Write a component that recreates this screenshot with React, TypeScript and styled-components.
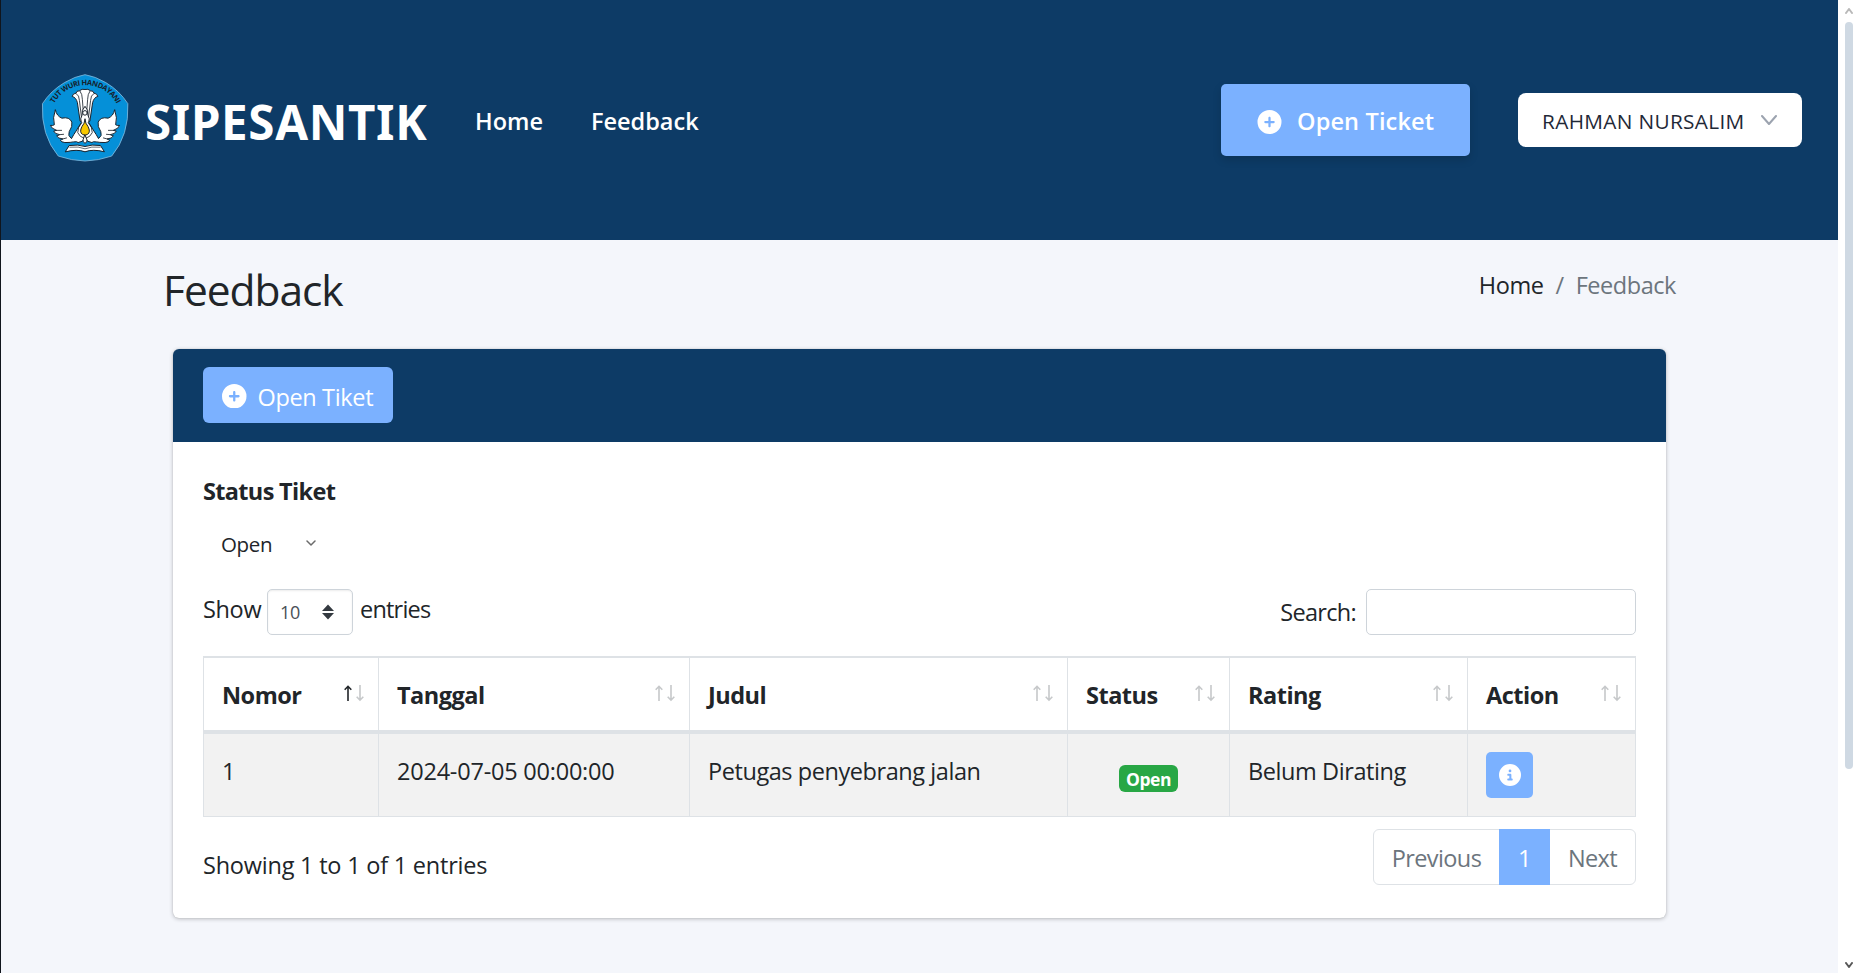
import React from "react";
import styled, { createGlobalStyle } from "styled-components";
import { FaCircleInfo, FaCirclePlus } from "react-icons/fa6";

const navy = "#0d3b66";
const sky = "#7bb1ff";
const line = "#dee2e6";
const ink = "#212529";

const GlobalStyle = createGlobalStyle`
  *, *::before, *::after { box-sizing: border-box; }
  html, body { margin: 0; height: 100%; overflow: hidden; background: #fff; }
  body {
    font: 400 23.5px/36px "Open Sans", "Noto Sans", sans-serif;
    letter-spacing: -0.35px;
    color: ${ink};
  }
  h1, p, label, nav { margin: 0; }
  button, input { font: inherit; letter-spacing: inherit; }
`;

const Window = styled.div`
  display: flex;
  width: 1859px;
  height: 973px;
  border-left: 1px solid #10151c;
`;

const Page = styled.div`
  flex: 1;
  min-width: 0;
  background: #f4f6fb;
`;

const Header = styled.header`
  display: flex;
  align-items: center;
  height: 240px;
  padding: 0 36px 0 40px;
  background: ${navy};
`;

const LogoSvg = styled.svg`
  width: 88px;
  height: 88px;
  margin-bottom: 4px;
`;

const Brand = styled.a`
  width: 297px;
  margin-left: 16px;
  padding-top: 4px;
  color: #fff;
  font: 700 47.5px/64px "Noto Sans", sans-serif;
  letter-spacing: 0.65px;
`;

const Nav = styled.nav`
  display: flex;
  flex: 1;
  gap: 48px;
  margin-left: 33px;
  padding-top: 2px;
`;

const NavLink = styled.a`
  color: #fff;
  font-weight: 600;
  letter-spacing: 0;
`;

const OpenTicket = styled.button`
  display: flex;
  align-items: center;
  gap: 15px;
  width: 249px;
  height: 72px;
  padding: 0 0 0 36px;
  border: 0;
  border-radius: 5px;
  background: ${sky};
  color: #fff;
  font-weight: 600;
  letter-spacing: 0.15px;
  box-shadow: 0 4px 8px rgba(0, 0, 0, 0.15);
  span { padding-top: 2px; }
  svg { width: 25px; height: 24px; margin-top: 4px; }
`;

const UserMenu = styled.button`
  display: flex;
  align-items: center;
  gap: 16px;
  width: 284px;
  height: 54px;
  margin-left: 48px;
  padding: 0 0 0 24px;
  border: 0;
  border-radius: 8px;
  background: #fff;
  color: #1f2937;
  font-size: 20.8px;
  letter-spacing: 0.32px;
  white-space: nowrap;
  span { padding-top: 1px; }
`;

const TitleBar = styled.div`
  display: flex;
  justify-content: space-between;
  height: 109px;
  padding: 24px 162px 0 162px;
`;

const Title = styled.h1`
  font-weight: 400;
  font-size: 42.5px;
  line-height: 52px;
  letter-spacing: -1.05px;
`;

const Breadcrumb = styled.nav`
  display: flex;
  gap: 12px;
  padding-top: 3px;
  color: #6c757d;
  letter-spacing: -0.45px;
  a { color: ${ink}; }
`;

const Card = styled.section`
  width: 1493px;
  height: 569px;
  margin-left: 172px;
  border-radius: 6px;
  background: #fff;
  box-shadow: 0 0 1px rgba(0, 0, 0, 0.2), 0 1px 4px rgba(0, 0, 0, 0.24);
`;

const CardHeader = styled.div`
  height: 93px;
  padding: 18px 30px 0;
  border-radius: 6px 6px 0 0;
  background: ${navy};
`;

const OpenTiket = styled.button`
  display: flex;
  align-items: center;
  gap: 11px;
  width: 190px;
  height: 56px;
  padding: 0 0 0 19px;
  border: 0;
  border-radius: 6px;
  background: ${sky};
  color: #fff;
  white-space: nowrap;
  span { padding-top: 3px; }
  svg { width: 24.5px; height: 24.5px; margin-top: 2px; }
`;

const CardBody = styled.div`
  padding: 31px 30px 0;
`;

const StatusLabel = styled.label`
  display: block;
  font-weight: 700;
  letter-spacing: -0.67px;
`;

const StatusSelect = styled.div`
  display: flex;
  align-items: center;
  justify-content: space-between;
  width: 113px;
  height: 32px;
  margin-top: 19px;
  padding-left: 18px;
  font-size: 20.5px;
  line-height: 32px;
  svg { margin-bottom: 2px; }
`;

const Controls = styled.div`
  display: flex;
  justify-content: space-between;
  height: 46px;
  margin-top: 29px;
`;

const LengthControl = styled.label`
  display: flex;
  line-height: 41px;
  span:first-child { width: 59px; }
  span:last-child { letter-spacing: -0.8px; }
`;

const LengthSelect = styled.span`
  display: flex;
  align-items: center;
  justify-content: space-between;
  width: 86px;
  height: 46px;
  margin: 0 7px 0 5px;
  padding: 0 18px 0 12px;
  border: 1px solid #ced4da;
  border-radius: 5px;
  box-shadow: inset 0 1px 2px rgba(0, 0, 0, 0.08);
  color: #495057;
  font-size: 18px;
`;

const SearchControl = styled.label`
  display: flex;
  gap: 10px;
  line-height: 46px;
  letter-spacing: -0.7px;
`;

const SearchInput = styled.input`
  width: 270px;
  height: 46px;
  border: 1px solid #ced4da;
  border-radius: 5px;
  background: #fff;
`;

const Table = styled.table`
  width: 1433px;
  height: 161px;
  margin-top: 21px;
  table-layout: fixed;
  border-spacing: 0;
  border-left: 1px solid ${line};
`;

const HeadCell = styled.th<{ $width: number }>`
  width: ${(p) => p.$width}px;
  height: 78px;
  padding: 19px 14px 0 18px;
  border-top: 2px solid ${line};
  border-bottom: 4px solid ${line};
  border-right: 1px solid ${line};
  text-align: left;
  vertical-align: top;
  letter-spacing: -0.5px;
`;

const HeadContent = styled.div`
  display: flex;
  justify-content: space-between;
  svg { margin-top: 8px; }
`;

const Cell = styled.td<{ $top?: number; $center?: boolean; $track?: number }>`
  height: 83px;
  padding: ${(p) => p.$top ?? 19}px 18px 0 18px;
  border-right: 1px solid ${line};
  border-bottom: 1px solid ${line};
  background: #f2f2f2;
  vertical-align: top;
  white-space: nowrap;
  text-align: ${(p) => (p.$center ? "center" : "left")};
  letter-spacing: ${(p) => p.$track ?? -0.42}px;
`;

const Badge = styled.span`
  display: inline-block;
  width: 59px;
  height: 27px;
  border-radius: 6px;
  background: #28a745;
  color: #fff;
  font-size: 17.5px;
  font-weight: 700;
  line-height: 28px;
  vertical-align: top;
`;

const InfoButton = styled.button`
  display: flex;
  align-items: center;
  justify-content: center;
  width: 47px;
  height: 46px;
  padding: 0;
  border: 0;
  border-radius: 5px;
  background: ${sky};
  color: #fff;
  svg { width: 22px; height: 22px; }
`;

const TableFooter = styled.div`
  display: flex;
  justify-content: space-between;
  margin-top: 12px;
`;

const Summary = styled.p`
  padding-top: 18px;
  letter-spacing: -0.22px;
`;

const Pagination = styled.div`
  display: flex;
  width: 263px;
  height: 56px;
  border: 1px solid ${line};
  border-radius: 6px;
`;

const PageLink = styled.a<{ $width: number; $active?: boolean }>`
  width: ${(p) => p.$width}px;
  margin: -1px 0;
  color: ${(p) => (p.$active ? "#fff" : "#6c757d")};
  background: ${(p) => (p.$active ? sky : "none")};
  line-height: 59px;
  text-align: center;
  letter-spacing: -0.6px;
`;

const Scrollbar = styled.aside`
  display: flex;
  flex-direction: column;
  align-items: center;
  width: 21px;
  padding: 8px 0 5px 1px;
  background: #fff;
`;

const Thumb = styled.div`
  width: 8px;
  height: 747px;
  margin: 8px 0 auto;
  border-radius: 4px;
  background: #cfd9e3;
`;

function Logo() {
  return (
    <LogoSvg viewBox="34 29 264 267" aria-label="Tut Wuri Handayani">
      <path d="M166 31Q197 36 229 55Q271 80 296 119Q300 215 247 278Q206 292 166 293Q126 292 85 278Q32 215 37 119Q62 80 104 55Q136 36 166 31Z" fill="#0590d8" stroke="#83b9dd" strokeWidth="2.5" />
      <path id="motto" d="M64 138A108 108 0 0 1 270 138" fill="none" />
      <text fill="#17202a" fontFamily="Open Sans" fontSize="22.5" fontWeight="700" letterSpacing="-1.3">
        <textPath href="#motto" startOffset="50%" textAnchor="middle">TUT WURI HANDAYANI</textPath>
      </text>
      <g fill="#fff" stroke="#17202a" strokeWidth="3" strokeLinejoin="round" strokeLinecap="round">
        <path d="M151 171L143 116Q139 100 127 97Q129 88 139 87Q139 80 149 80Q157 73 166 76Q175 73 183 80Q193 80 193 87Q203 88 205 97Q193 100 189 116L181 171Z" />
        <path d="M139 88Q149 94 149 109L155 158M151 81Q158 90 158 106L161 145M193 88Q183 94 183 109L177 158M181 81Q174 90 174 106L171 145" fill="none" strokeWidth="2.5" />
        <path d="M166 225Q158 236 145 237Q143 233 131 235Q124 237 105 237Q94 236 91 230Q96 228 99 226Q84 225 80 217Q86 216 89 213Q74 211 71 202L80 200Q63 194 61 185Q69 186 73 183Q67 163 76 137Q80 157 96 163Q119 158 126 175Q129 188 118 204Q113 217 125 225Q132 212 139 202L155 176Q150 165 157 154Q155 138 166 127Q177 138 175 154Q182 165 177 176L193 202Q200 212 207 225Q219 217 214 204Q203 188 206 175Q213 158 236 163Q252 157 256 137Q265 163 259 183Q263 186 271 185Q269 194 252 200L261 202Q258 211 243 213Q246 216 252 217Q248 225 233 226Q236 228 241 230Q238 236 227 237Q208 237 201 235Q189 233 187 237Q174 236 166 225Z" />
        <path d="M80 200L95 200M89 213L101 212M99 226L110 223M252 200L237 200M243 213L231 212M233 226L222 223M156 177Q143 190 144 207Q149 220 166 225Q183 220 188 207Q189 190 176 177" fill="none" strokeWidth="2.5" />
        <path d="M166 166Q167 180 175 188Q184 205 174 212Q166 218 158 212Q148 205 157 188Q165 180 166 166Z" fill="#f8c800" />
        <path d="M166 214L172 229Q174 237 166 239Q158 237 160 229Z" />
        <circle cx="166" cy="147" r="7" />
        <path d="M119 246Q146 242 166 249Q186 242 213 246L225 265Q190 256 166 265Q142 256 107 265Z" />
        <path d="M120 251Q148 248 166 256Q184 248 212 251" fill="none" strokeWidth="2" />
      </g>
    </LogoSvg>
  );
}

function Chevron({ width, height, color, weight, up }: { width: number; height: number; color: string; weight: number; up?: boolean }) {
  return (
    <svg width={width} height={height} viewBox={`0 0 ${width} ${height}`} fill="none" stroke={color} strokeWidth={weight} strokeLinecap="round" strokeLinejoin="round">
      <path d={up ? `M1 ${height - 1}L${width / 2} 1L${width - 1} ${height - 1}` : `M1 1L${width / 2} ${height - 1}L${width - 1} 1`} />
    </svg>
  );
}

function SortArrows({ active }: { active?: boolean }) {
  return (
    <svg width="20" height="17" viewBox="0 0 20 17" fill="none" strokeWidth="1.6">
      <path d="M4 16V1.5M0.7 4.8L4 1.3L7.3 4.8" stroke={active ? ink : "#c6c8ca"} />
      <path d="M16 0V14.5M12.7 11.7L16 15.2L19.3 11.7" stroke="#c6c8ca" />
    </svg>
  );
}

const columns: [string, number][] = [
  ["Nomor", 175],
  ["Tanggal", 311],
  ["Judul", 378],
  ["Status", 162],
  ["Rating", 238],
  ["Action", 168],
];

export default function App() {
  return (
    <Window>
      <GlobalStyle />
      <Page>
        <Header>
          <Logo />
          <Brand>SIPESANTIK</Brand>
          <Nav>
            <NavLink>Home</NavLink>
            <NavLink>Feedback</NavLink>
          </Nav>
          <OpenTicket>
            <FaCirclePlus />
            <span>Open Ticket</span>
          </OpenTicket>
          <UserMenu>
            <span>RAHMAN NURSALIM</span>
            <Chevron width={16} height={10} color="#9ca3af" weight={2} />
          </UserMenu>
        </Header>
        <TitleBar>
          <Title>Feedback</Title>
          <Breadcrumb>
            <a>Home</a>
            <span>/</span>
            <span>Feedback</span>
          </Breadcrumb>
        </TitleBar>
        <Card>
          <CardHeader>
            <OpenTiket>
              <FaCirclePlus />
              <span>Open Tiket</span>
            </OpenTiket>
          </CardHeader>
          <CardBody>
            <StatusLabel>Status Tiket</StatusLabel>
            <StatusSelect>
              Open
              <Chevron width={10} height={6} color="#6b6b6b" weight={1.5} />
            </StatusSelect>
            <Controls>
              <LengthControl>
                <span>Show</span>
                <LengthSelect>
                  10
                  <svg width="12" height="16" viewBox="0 0 12 16" fill="#343a40">
                    <path d="M0 7L6 0.5L12 7ZM0 9L6 15.5L12 9Z" />
                  </svg>
                </LengthSelect>
                <span>entries</span>
              </LengthControl>
              <SearchControl>
                <span>Search:</span>
                <SearchInput />
              </SearchControl>
            </Controls>
            <Table>
              <thead>
                <tr>
                  {columns.map(([name, width], i) => (
                    <HeadCell key={name} $width={width}>
                      <HeadContent>
                        {name}
                        <SortArrows active={i === 0} />
                      </HeadContent>
                    </HeadCell>
                  ))}
                </tr>
              </thead>
              <tbody>
                <tr>
                  <Cell>1</Cell>
                  <Cell $track={-0.22}>2024-07-05 00:00:00</Cell>
                  <Cell $track={-0.43}>Petugas penyebrang jalan</Cell>
                  <Cell $center $top={31}>
                    <Badge>Open</Badge>
                  </Cell>
                  <Cell>Belum Dirating</Cell>
                  <Cell $top={18}>
                    <InfoButton aria-label="Detail">
                      <FaCircleInfo />
                    </InfoButton>
                  </Cell>
                </tr>
              </tbody>
            </Table>
            <TableFooter>
              <Summary>Showing 1 to 1 of 1 entries</Summary>
              <Pagination>
                <PageLink $width={125}>Previous</PageLink>
                <PageLink $width={51} $active>1</PageLink>
                <PageLink $width={85}>Next</PageLink>
              </Pagination>
            </TableFooter>
          </CardBody>
        </Card>
      </Page>
      <Scrollbar>
        <Chevron width={8} height={6} color="#b9b9b9" weight={2} up />
        <Thumb />
        <Chevron width={8} height={6} color="#585858" weight={2} />
      </Scrollbar>
    </Window>
  );
}
